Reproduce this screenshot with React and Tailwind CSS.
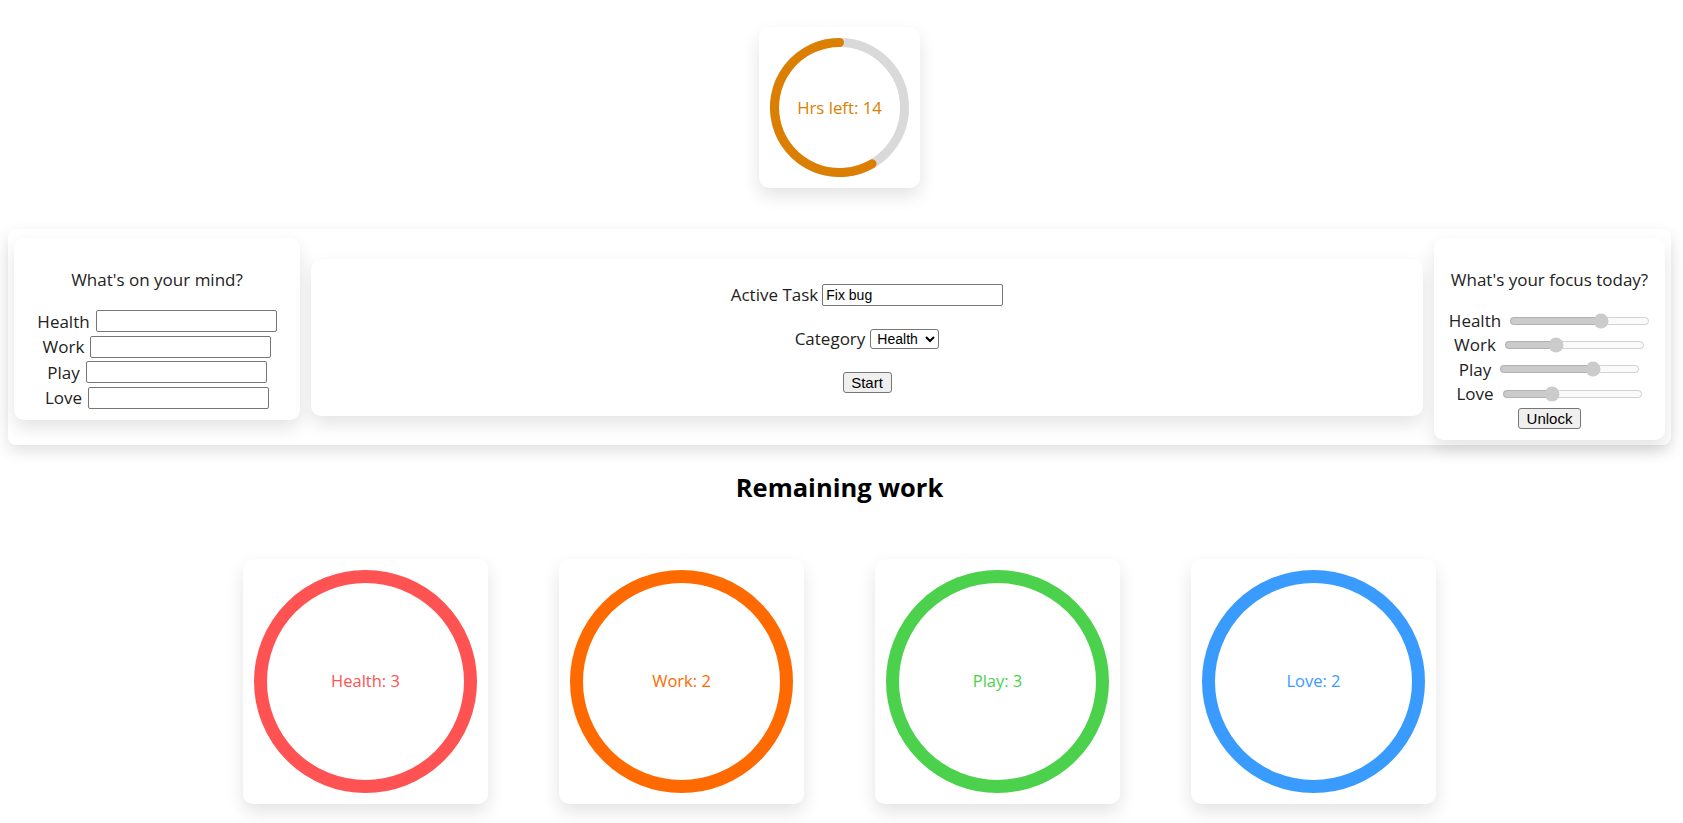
import { useState } from "react";

const CATEGORIES = [
  { name: "Health", count: 3, color: "#ff5252", text: "text-[#ff5252]" },
  { name: "Work", count: 2, color: "#ff6a00", text: "text-[#ff6a00]" },
  { name: "Play", count: 3, color: "#4bd14b", text: "text-[#4bd14b]" },
  { name: "Love", count: 2, color: "#3a9bff", text: "text-[#3a9bff]" },
];

const FOCUS = [
  { name: "Health", value: 67 },
  { name: "Work", value: 35 },
  { name: "Play", value: 69 },
  { name: "Love", value: 34 },
];

const card = "rounded-[10px] bg-white shadow-[0_8px_18px_rgba(0,0,0,0.11)]";
const field = "h-[22px] w-[181px] rounded-[2px] border border-[#767676] bg-white px-[3px] font-['Liberation_Sans',Arial,sans-serif] text-[14px] text-black outline-none";
const btn = "h-[21px] rounded-[3px] border border-[#767676] bg-[#efefef] px-[6px] font-['Liberation_Sans',Arial,sans-serif] text-[15px] leading-none text-black";

function HoursRing({ left = 14 }) {
  const r = 65;
  const c = 69.5;
  const angle = (left / 24) * 2 * Math.PI;
  const ex = c - r * Math.sin(angle);
  const ey = c - r * Math.cos(angle);
  return (
    <div className="relative h-[139px] w-[139px]">
      <svg width="139" height="139" viewBox="0 0 139 139">
        <circle cx={c} cy={c} r={r} fill="none" stroke="#d9d9d9" strokeWidth="9" />
        <path
          d={`M ${c} ${c - r} A ${r} ${r} 0 ${left > 12 ? 1 : 0} 0 ${ex} ${ey}`}
          fill="none"
          stroke="#dc7e00"
          strokeWidth="9"
          strokeLinecap="round"
        />
      </svg>
      <span className="absolute inset-0 flex items-center justify-center text-[16.75px] text-[#dc7e00]">
        Hrs left: {left}
      </span>
    </div>
  );
}

function CategoryRing({ cat }) {
  return (
    <div className={`${card} p-[11px]`}>
      <div className="relative h-[223px] w-[223px]">
        <svg width="223" height="223" viewBox="0 0 223 223">
          <circle cx="111.5" cy="111.5" r="105" fill="none" stroke={cat.color} strokeWidth="13" />
        </svg>
        <span className={`absolute inset-0 flex items-center justify-center text-[16.5px] ${cat.text}`}>
          {cat.name}: {cat.count}
        </span>
      </div>
    </div>
  );
}

function MindCard() {
  return (
    <div className={`${card} flex h-[182px] w-[286px] flex-col items-center pt-[30px]`}>
      <h3 className="mb-[16.5px] text-[17px] leading-[24px]">What's on your mind?</h3>
      {CATEGORIES.map((c) => (
        <label key={c.name} className="flex h-[25.5px] items-center justify-center gap-[6px] text-[17px]">
          {c.name}
          <input type="text" className={field} />
        </label>
      ))}
    </div>
  );
}

function TaskCard() {
  const [task, setTask] = useState("Fix bug");
  return (
    <div className={`${card} mt-[21px] flex h-[157px] flex-1 flex-col items-center pt-[23.5px]`}>
      <label className="flex h-[24px] items-center gap-[4px] text-[17px]">
        Active Task
        <input type="text" value={task} onChange={(e) => setTask(e.target.value)} className={field} />
      </label>
      <label className="mt-[20.5px] flex h-[24px] items-center gap-[5px] text-[17px]">
        Category
        <select className="h-[20px] w-[69px] rounded-[3px] border border-[#767676] bg-white pl-[2px] font-['Liberation_Sans',Arial,sans-serif] text-[14px] text-black">
          {CATEGORIES.map((c) => (
            <option key={c.name}>{c.name}</option>
          ))}
        </select>
      </label>
      <button className={`${btn} mt-[21px] w-[49px]`}>Start</button>
    </div>
  );
}

function FocusCard() {
  return (
    <div className={`${card} flex h-[202px] w-[231px] flex-col items-center pt-[30px]`}>
      <h3 className="mb-[16.5px] text-[17px] leading-[24px]">What's your focus today?</h3>
      {FOCUS.map((f) => (
        <label key={f.name} className="flex h-[24.3px] items-center justify-center gap-[8px] text-[17px]">
          {f.name}
          <input type="range" min="0" max="100" defaultValue={f.value} disabled className="w-[141px]" />
        </label>
      ))}
      <button className={`${btn} mt-[2px] w-[63px]`}>Unlock</button>
    </div>
  );
}

export default function App() {
  return (
    <div className="min-h-screen bg-white pr-[4px] font-['Open_Sans',sans-serif] text-[#222]">
      <div className="flex justify-center pt-[27px]">
        <div className={`${card} p-[11px]`}>
          <HoursRing left={14} />
        </div>
      </div>

      <div className="mx-[8px] mt-[41px] flex h-[216px] items-start gap-[11px] rounded-[8px] bg-white px-[6px] pt-[9px] shadow-[0_6px_16px_rgba(0,0,0,0.12)]">
        <MindCard />
        <TaskCard />
        <FocusCard />
      </div>

      <h2 className="mt-[23.5px] text-center text-[25.5px] font-bold leading-[37px] text-black">Remaining work</h2>

      <div className="mt-[53.5px] flex justify-center gap-[71px]">
        {CATEGORIES.map((c) => (
          <CategoryRing key={c.name} cat={c} />
        ))}
      </div>
    </div>
  );
}
